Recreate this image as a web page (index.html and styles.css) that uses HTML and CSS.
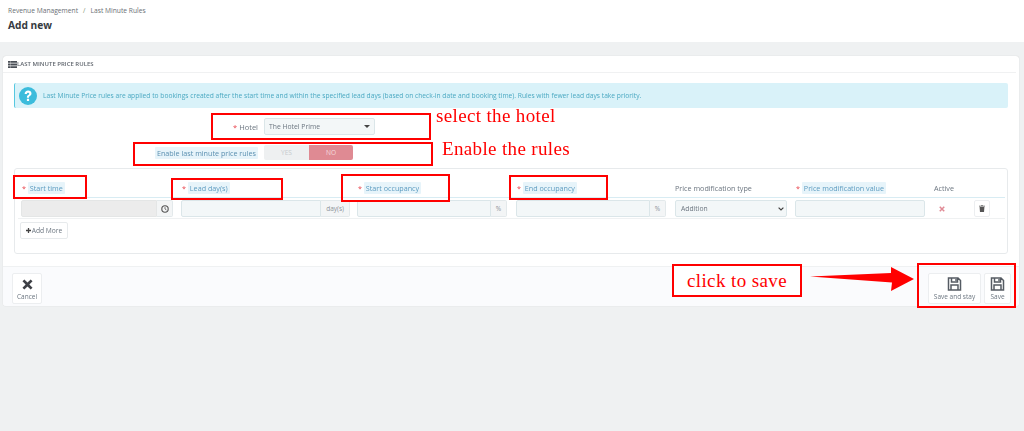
FILE: index.html
```html
<!DOCTYPE html>
<html lang="en">
<head>
<meta charset="utf-8">
<title>Add new</title>
<link rel="stylesheet" href="styles.css">
</head>
<body>
<div class="page">
  <header class="topbar">
    <nav class="crumbs"><span>Revenue Management</span><i>/</i><span>Last Minute Rules</span></nav>
    <h1>Add new</h1>
  </header>
  <main class="panel">
    <div class="panel-head">
      <svg class="head-icon" viewBox="0 0 9 7"><path d="M0 0h2v1.800H0zM2.300 0H9v1.800H2.300zM0 2.600h2v1.800H0zM2.300 2.600H9v1.800H2.300zM0 5.200h2V7H0zM2.300 5.200H9V7H2.300z"/></svg>
      <span>LAST MINUTE PRICE RULES</span>
    </div>
    <div class="panel-body">
      <div class="alert">
        <svg class="alert-icon" viewBox="0 0 18 18"><circle cx="9" cy="9" r="9" fill="#3bbcdc"/><path d="M5.600 7c.1-2.200 1.600-3.400 3.500-3.400 2 0 3.400 1.200 3.400 2.900 0 1.300-.7 2-1.600 2.600-.7.5-.9.8-.9 1.600H7.900c0-1.300.3-1.900 1.300-2.600.6-.5 1-.8 1-1.400 0-.6-.5-1-1.100-1-.7 0-1.200.5-1.300 1.300zM7.900 11.700h2.200v2.300H7.900z" fill="#fff"/></svg>
        <p>Last Minute Price rules are applied to bookings created after the start time and within the specified lead days (based on check-in date and booking time). Rules with fewer lead days take priority.</p>
      </div>
      <div class="form-row hotel-row">
        <label class="form-label"><b class="req">*</b> Hotel</label>
        <div class="hotel-select"><span>The Hotel Prime</span><i class="caret"></i></div>
      </div>
      <div class="form-row toggle-row">
        <label class="form-label"><span class="hint">Enable last minute price rules</span></label>
        <div class="toggle"><span class="yes">YES</span><span class="no">NO</span></div>
      </div>
      <section class="well">
        <div class="rules-grid rules-head">
          <div class="ind"><b class="req">*</b> <span class="hint">Start time</span></div>
          <div class="ind"><b class="req">*</b> <span class="hint">Lead day(s)</span></div>
          <div class="ind"><b class="req">*</b> <span class="hint">Start occupancy</span></div>
          <div class="ind"><b class="req">*</b> <span class="hint">End occupancy</span></div>
          <div>Price modification type</div>
          <div class="ind"><b class="req">*</b> <span class="hint">Price modification value</span></div>
          <div>Active</div>
          <div></div>
        </div>
        <div class="rules-grid rules-row">
          <div class="cell pad8"><div class="group"><input class="field locked" type="text" disabled><span class="addon icon-addon"><svg viewBox="0 0 10 10"><circle cx="5" cy="5" r="4" fill="none" stroke="#555" stroke-width="1.400"/><path d="M5 2.600V5l1.800 1.200" fill="none" stroke="#555" stroke-width="1"/></svg></span></div></div>
          <div class="cell pad7"><div class="group"><input class="field" type="text"><span class="addon">day(s)</span></div></div>
          <div class="cell pad9"><div class="group"><input class="field" type="text"><span class="addon">%</span></div></div>
          <div class="cell pad9"><div class="group"><input class="field" type="text"><span class="addon">%</span></div></div>
          <div class="cell pad8"><select class="type-select"><option>Addition</option></select></div>
          <div class="cell pad9"><input class="field full" type="text"></div>
          <div class="cell active-cell"><svg viewBox="0 0 8 8"><path d="M1 1l6 6M7 1L1 7" stroke="#e08a95" stroke-width="2"/></svg></div>
          <div class="cell"><button class="trash" type="button"><svg viewBox="0 0 8 9"><path d="M3 0h2l.4.8H8v1H0v-1h2.600zM.8 2.500h6.400L6.700 9H1.300z" fill="#555"/></svg></button></div>
        </div>
        <button class="add-more" type="button"><svg viewBox="0 0 7 7"><path d="M2.600 0h1.800v2.600H7v1.800H4.400V7H2.600V4.400H0V2.600h2.600z" fill="#444"/></svg>Add More</button>
      </section>
    </div>
    <footer class="panel-foot">
      <button class="tool" type="button">
        <svg class="x-icon" viewBox="0 0 14 14"><path d="M3 .6L7 4.600 11 .6 13.400 3 9.400 7l4 4L11 13.400l-4-4-4 4L.6 11l4-4-4-4z" fill="#3e4046"/></svg>
        <span>Cancel</span>
      </button>
      <div class="foot-right">
        <button class="tool stay" type="button">
          <svg class="save-icon" viewBox="0 0 14 14"><path d="M1 1h9.500L13 3.500V13H1z M4 1v4h6V1 M3.500 13V8h7v5" fill="none" stroke="#555b63" stroke-width="1.500"/><path d="M7.800 2h1.400v2H7.800z" fill="#555b63"/></svg>
          <span>Save and stay</span>
        </button>
        <button class="tool" type="button">
          <svg class="save-icon" viewBox="0 0 14 14"><path d="M1 1h9.500L13 3.500V13H1z M4 1v4h6V1 M3.500 13V8h7v5" fill="none" stroke="#555b63" stroke-width="1.500"/><path d="M7.800 2h1.400v2H7.800z" fill="#555b63"/></svg>
          <span>Save</span>
        </button>
      </div>
    </footer>
  </main>
  <div class="mark m-hotel"></div>
  <div class="mark m-enable"></div>
  <div class="mark m-start"></div>
  <div class="mark m-lead"></div>
  <div class="mark m-socc"></div>
  <div class="mark m-eocc"></div>
  <div class="mark m-save"></div>
  <div class="mark m-click">click to save</div>
  <div class="note n-hotel">select the hotel</div>
  <div class="note n-enable">Enable the rules</div>
  <svg class="arrow" viewBox="0 0 108 26"><path d="M1 9.500L82 6 82 0 105 12 82 24 83 15.500z" fill="#f00"/></svg>
</div>
</body>
</html>
```
FILE: styles.css
```css
* { box-sizing: border-box; }
html, body { margin: 0; padding: 0; height: 100%; overflow: hidden; }
body { background: #eff1f2; font-family: "Open Sans", sans-serif; font-size: 7.2px; color: #6c7680; }
.page { position: relative; width: 1024px; height: 431px; overflow: hidden; filter: blur(.35px); }

.topbar { height: 42px; background: #fff; padding: 6px 8px 0; margin-bottom: 14px; }
.crumbs { display: flex; gap: 5px; height: 9px; line-height: 9px; font-size: 6.7px; color: #6a6f75; }
.crumbs i { font-style: normal; color: #8a9a7c; }
.topbar h1 { margin: 4px 0 0; font-size: 10.2px; line-height: 12px; font-weight: 700; color: #363a41; }

.panel { margin: 0 5px 0 3px; height: 250px; background: #fff; border-radius: 3px; box-shadow: 0 0 1px rgba(0,0,0,.22); display: flex; flex-direction: column; }
.panel-head { height: 17px; margin: 0 3px 0 0; padding-left: 5px; display: flex; align-items: center; gap: 0; border-bottom: 1px solid #f0f1f2; font-size: 6px; font-weight: 600; color: #60666e; }
.head-icon { width: 9px; height: 7px; fill: #4a4f56; }
.panel-body { flex: 1; padding: 10px 11px 0; }

.alert { height: 25px; background: #d9f2f9; border-left: 1px solid #57c8e0; border-radius: 2px; display: flex; align-items: center; padding-left: 4px; }
.alert-icon { width: 18px; height: 18px; flex: none; }
.alert p { margin: 0 0 0 6px; color: #4ba9c2; font-size: 6.68px; white-space: nowrap; }

.form-row { display: flex; align-items: center; }
.form-label { width: 244px; margin-right: 6px; text-align: right; color: #6c7680; white-space: nowrap; }
.hotel-row { height: 17px; margin-top: 10px; font-size: 7.5px; }
.toggle-row { height: 15px; margin-top: 10px; }
.req { color: #e8414a; font-weight: 400; }
.hint { background: #e7f4fa; color: #5d9cc0; padding: 1px 2px; border-radius: 1px; }
.toggle-row .hint { color: #5a8fb0; }

.hotel-select { width: 111px; height: 17px; background: #f3f7f8; border: 1px solid #dbe6e9; border-radius: 2px; padding: 0 4px; display: flex; align-items: center; justify-content: space-between; color: #6c7680; font-size: 6.8px; }
.caret { width: 0; height: 0; border: 3px solid transparent; border-top: 3px solid #444; border-bottom: 0; }

.toggle { width: 89px; height: 15px; display: flex; border-radius: 2px; overflow: hidden; font-size: 6.6px; line-height: 15px; text-align: center; }
.yes { width: 45px; background: #eef0f1; color: #c6cacd; }
.no { flex: 1; background: #df8a93; color: #f4dadd; }

.well { height: 86px; margin-top: 8px; border: 1px solid #e7eaec; border-radius: 3px; padding: 0 3px; }
.rules-grid { display: grid; grid-template-columns: 160px 176px 159px 159px 120px 139px 40px 30px; margin-right: -1px; }
.rules-head { height: 29px; align-items: end; padding-bottom: 4px; border-bottom: 1px solid #d8ecf3; padding-left: 3px; white-space: nowrap; }
.ind { padding-left: 1px; }
.rules-row { height: 21px; padding: 2px 0 0 3px; border-bottom: 1px solid #eff1f2; }
.cell { height: 17px; }
.pad7 { padding-right: 7px; }
.pad8 { padding-right: 8px; }
.pad9 { padding-right: 9px; }

.group { display: flex; height: 17px; }
.field { flex: 1; min-width: 0; height: 17px; margin: 0; background: #f3f7f8; border: 1px solid #dbe6e9; border-radius: 2px 0 0 2px; padding: 0; }
.field.full { width: 100%; display: block; border-radius: 2px; }
.field.locked { background: #ececec; border-color: #e4e6e6; }
.addon { flex: none; height: 17px; padding: 0 5px; display: flex; align-items: center; background: #f3f5f6; border: 1px solid #e3e9eb; border-left: 0; border-radius: 0 2px 2px 0; font-size: 6.5px; color: #8b9298; }
.icon-addon { width: 16px; padding: 0; justify-content: center; }
.icon-addon svg { width: 8px; height: 8px; }
.type-select { appearance: none; width: 100%; height: 17px; margin: 0; background: #f3f7f8 url("data:image/svg+xml,%3Csvg xmlns='http://www.w3.org/2000/svg' viewBox='0 0 6 4'%3E%3Cpath d='M.6.6L3 3l2.400-2.400' fill='none' stroke='%23444' stroke-width='1.200'/%3E%3C/svg%3E") no-repeat right 2px center / 6px 4px; border: 1px solid #dbe6e9; border-radius: 2px; font-family: inherit; font-size: 6.8px; color: #6c7680; padding: 0 5px; }
.active-cell { display: flex; align-items: center; padding-left: 5px; }
.active-cell svg { width: 6px; height: 6px; }
.trash { width: 16px; height: 17px; padding: 0; background: #fff; border: 1px solid #eceef0; border-radius: 2px; display: flex; align-items: center; justify-content: center; }
.trash svg { width: 6px; height: 7px; }
.add-more { margin: 3px 0 0 2px; width: 48px; height: 17px; padding: 0; background: #fff; border: 1px solid #e7eaec; border-radius: 2px; display: flex; align-items: center; justify-content: center; gap: 1px; font-family: inherit; font-size: 6.7px; color: #6c7680; }
.add-more svg { width: 5px; height: 5px; }

.panel-foot { height: 40px; background: #fafbfd; border-top: 1px solid #eff1f2; border-radius: 0 0 3px 3px; padding: 6px 8px 0 9px; display: flex; justify-content: space-between; align-items: flex-start; }
.foot-right { display: flex; gap: 3px; }
.tool { width: 30px; height: 31px; padding: 3px 0 0; background: #fff; border: 1px solid #eceef0; border-radius: 2px; display: flex; flex-direction: column; align-items: center; font-family: inherit; font-size: 6.5px; line-height: 9px; color: #6c7680; }
.foot-right .tool { width: 27px; }
.foot-right .stay { width: 53px; }
.x-icon { width: 11px; height: 11px; margin: 2px 0; }
.save-icon { width: 15px; height: 14px; margin: 0 0 1px; }

.mark { position: absolute; border: 2px solid #f00; }
.m-hotel { left: 211px; top: 113px; width: 220px; height: 27px; }
.m-enable { left: 133px; top: 142px; width: 300px; height: 24px; }
.m-start { left: 13px; top: 175px; width: 74px; height: 24px; }
.m-lead { left: 171px; top: 178px; width: 112px; height: 22px; }
.m-socc { left: 341px; top: 174px; width: 109px; height: 28px; }
.m-eocc { left: 509px; top: 175px; width: 99px; height: 25px; }
.m-save { left: 917px; top: 263px; width: 99px; height: 45px; }
.m-click { left: 672px; top: 264px; width: 130px; height: 33px; background: #fff; display: flex; align-items: center; justify-content: center; font-family: "Liberation Serif", serif; font-size: 19px; letter-spacing: .4px; color: #f00; }
.note { position: absolute; font-family: "Liberation Serif", serif; font-size: 19px; line-height: 22px; letter-spacing: .35px; color: #f00; white-space: nowrap; }
.n-hotel { left: 436px; top: 105px; }
.n-enable { left: 442px; top: 138px; }
.arrow { position: absolute; left: 809px; top: 267px; width: 108px; height: 26px; }
```
